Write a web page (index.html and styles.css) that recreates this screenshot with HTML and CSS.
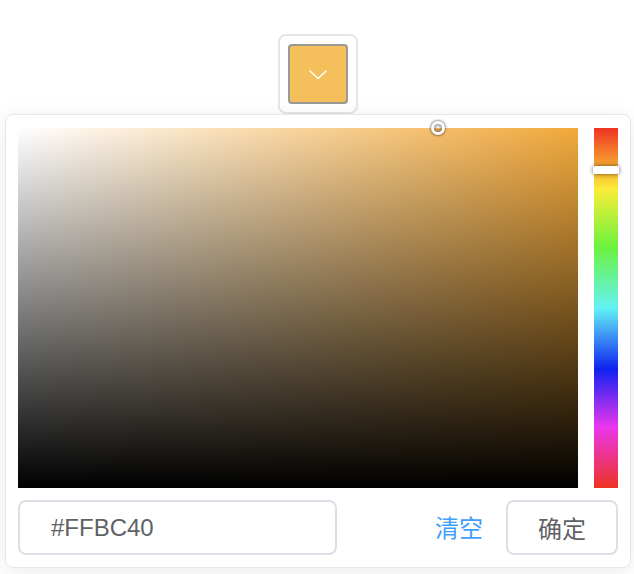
FILE: index.html
```html
<!DOCTYPE html>
<html lang="zh">
<head>
<meta charset="utf-8">
<title>Color picker</title>
<link rel="stylesheet" href="styles.css">
</head>
<body>
<div class="page">
  <div class="trigger">
    <div class="swatch">
      <svg class="arrow" width="20" height="12" viewBox="0 0 20 12"><path d="M2 2 L10 9.5 L18 2" fill="none" stroke="#fff" stroke-width="1.6" stroke-linecap="round" stroke-linejoin="round"/></svg>
    </div>
  </div>
  <div class="panel">
    <div class="picker">
      <div class="sv">
        <div class="sv-white"></div>
        <div class="sv-black"></div>
        <div class="sv-cursor"></div>
      </div>
      <div class="hue">
        <div class="hue-thumb"></div>
      </div>
    </div>
    <div class="footer">
      <div class="input">#FFBC40</div>
      <span class="clear">清空</span>
      <button class="ok">确定</button>
    </div>
  </div>
</div>
</body>
</html>
```
FILE: styles.css
```css
* { box-sizing: border-box; }
html, body { margin: 0; padding: 0; background: #fff; }
body { font-family: "Liberation Sans", "Noto Sans CJK SC", sans-serif; }
.page { display: flex; flex-direction: column; align-items: flex-start; width: 634px; height: 574px; overflow: hidden; }
.trigger {
  margin: 34px 0 0 278px;
  width: 80px; height: 80px;
  border: 2px solid #e6e6e6; border-radius: 8px;
  padding: 8px;
}
.swatch {
  width: 60px; height: 60px;
  border: 2px solid #999; border-radius: 4px;
  background: #f5bf5b;
  display: flex; align-items: center; justify-content: center;
}
.arrow { display: block; margin-top: 2px; }
.panel {
  margin: 0 0 0 5px;
  width: 626px;
  border: 1px solid #e4e7ed; border-radius: 8px;
  background: #fff;
  box-shadow: 0 4px 24px rgba(0,0,0,0.08);
  padding: 13px 12px 12px 12px;
}
.picker { display: flex; gap: 16px; }
.sv {
  position: relative;
  width: 560px; height: 360px;
  background: #f2a93b;
}
.sv-white, .sv-black { position: absolute; inset: 0; }
.sv-white { background: linear-gradient(to right, #fff, rgba(255,255,255,0)); }
.sv-black { background: linear-gradient(to top, #000, rgba(0,0,0,0)); }
.sv-cursor {
  position: absolute; left: 416px; top: -4px;
  width: 8px; height: 8px; border-radius: 50%;
  box-shadow: 0 0 0 3px #fff, inset 0 0 2px 2px rgba(0,0,0,0.3), 0 0 2px 4px rgba(0,0,0,0.4);
}
.hue {
  position: relative;
  width: 24px; height: 360px;
  background: linear-gradient(to bottom, #ee3322 0%, #fbed3a 17%, #6cf23c 33%, #63f2f5 50%, #0f22f0 67%, #ea36ee 83%, #ee3322 100%);
}
.hue-thumb {
  position: absolute; left: -1px; top: 38px;
  width: 26px; height: 8px;
  background: #fff; border-radius: 2px;
  box-shadow: 0 0 4px rgba(0,0,0,0.6);
}
.footer { display: flex; align-items: center; margin-top: 12px; }
.input {
  width: 319px; height: 55px;
  border: 2px solid #dcdfe6; border-radius: 8px;
  padding-left: 31px;
  display: flex; align-items: center;
  font-size: 24px; color: #606266;
}
.clear {
  margin-left: auto; margin-right: 23px;
  font-size: 24px; color: #409eff;
  font-family: "Noto Sans CJK SC", sans-serif;
  line-height: 1;
  margin-top: -2px;
}
.ok {
  width: 112px; height: 55px;
  border: 2px solid #dcdfe6; border-radius: 8px;
  background: #fff;
  font-family: "Noto Sans CJK SC", sans-serif;
  font-size: 24px; color: #606266;
  padding: 0;
}
```
